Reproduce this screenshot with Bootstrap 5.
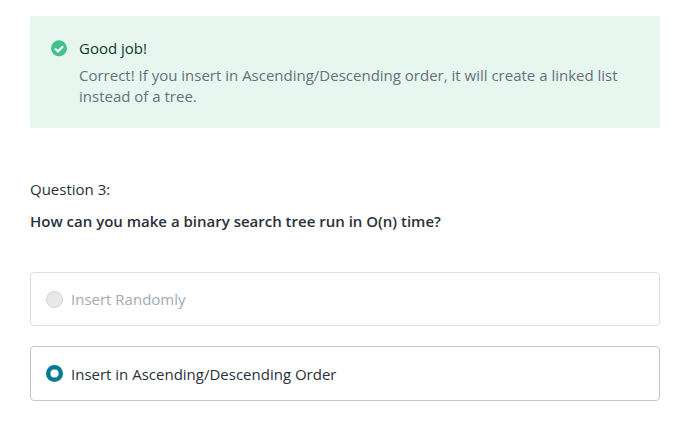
<!DOCTYPE html>
<html lang="en">
<head>
<meta charset="utf-8">
<meta name="viewport" content="width=device-width, initial-scale=1">
<title>Quiz</title>
<link href="https://cdn.jsdelivr.net/npm/bootstrap@5.3.0/dist/css/bootstrap.min.css" rel="stylesheet">
<style>
body{font-family:"Open Sans",sans-serif;font-size:15px;line-height:21px;color:#2b303b;background:#fff;overflow:hidden}
.quiz{padding:16px 27px 0 30px}
.feedback{background:#e7f6ef;height:112px;padding:22px 20px 0 21px;border-radius:2px}
.feedback svg{margin-top:2px}
.feedback-title{color:#103a2c}
.feedback-text{color:#67707b;margin-top:6px}
.question{margin-top:51px}
.prompt{margin-top:11px;margin-bottom:40px;font-weight:600}
.answer{height:54px;border:1px solid #dedede;border-radius:4px;padding:0 15px;gap:8px}
.answer.chosen{height:55px;border-color:#c6c6c6;margin-top:20px}
.answer.chosen .answer-label{padding-top:1px}
.answer.muted{color:#a4a9b2}
.dot{width:17px;height:17px;border-radius:50%;border:1px solid #d0d1d3;background:#e7e8ea}
.chosen .dot{border:4.5px solid #017a94;border-width:4.5px;background:#fff;box-shadow:inset 0 0 0 .4px #017a94}
</style>
</head>
<body>
<main class="quiz">
<div class="feedback d-flex">
<svg width="16" height="17" viewBox="0 0 16 17" class="flex-shrink-0"><circle cx="8" cy="8.3" r="8" fill="#45c08d"/><path d="M3.9 8.5 7 11.4 12.1 6.3" fill="none" stroke="#eefaf4" stroke-width="2.3"/></svg>
<div class="ms-2 ps-1"><div class="feedback-title">Good job!</div>
<div class="feedback-text">Correct! If you insert in Ascending/Descending order, it will create a linked list instead of a tree.</div></div>
</div>
<div class="question">Question 3:</div>
<div class="prompt">How can you make a binary search tree run in O(n) time?</div>
<div class="answer muted d-flex align-items-center"><span class="dot"></span><span class="answer-label">Insert Randomly</span></div>
<div class="answer chosen d-flex align-items-center"><span class="dot"></span><span class="answer-label">Insert in Ascending/Descending Order</span></div>
</main>
<script src="https://cdn.jsdelivr.net/npm/bootstrap@5.3.0/dist/js/bootstrap.bundle.min.js"></script>
</body>
</html>
